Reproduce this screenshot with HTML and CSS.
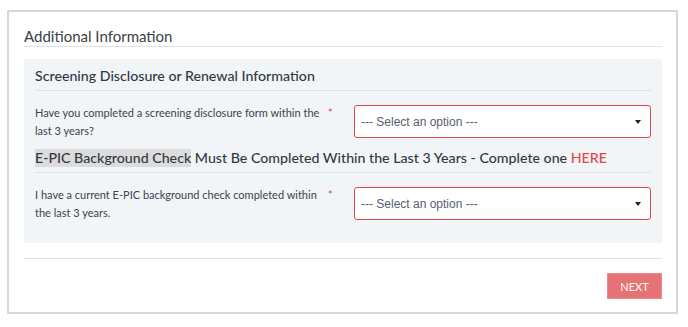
FILE: index.html
```html
<!DOCTYPE html>
<html lang="en">
<head>
  <meta charset="UTF-8" />
  <title>Additional Information</title>
  <link rel="stylesheet" href="styles.css">
</head>
<body>
  <div class="card">
    <h2 class="legend">Additional Information</h2>
    <div class="panel">
      <h3 class="section">Screening Disclosure or Renewal Information</h3>
      <div class="row">
        <label class="question">Have you completed a screening disclosure form within the last 3 years?</label>
        <span class="req">*</span>
        <div class="select"><span>--- Select an option ---</span><span class="caret"></span></div>
      </div>
      <h3 class="section"><span class="mark">E-PIC Background Check</span> Must Be Completed Within the Last 3 Years - Complete one <a href="#">HERE</a></h3>
      <div class="row">
        <label class="question">I have a current E-PIC background check completed within the last 3 years.</label>
        <span class="req">*</span>
        <div class="select"><span>--- Select an option ---</span><span class="caret"></span></div>
      </div>
    </div>
    <div class="footer">
      <button class="next">NEXT</button>
    </div>
  </div>
</body>
</html>
```

FILE: styles.css
```css
:root {
  --text: #333a40;
  --red: #e04848;
  --line: #dee2e6;
  --panel: #f1f5f8;
}
* { box-sizing: border-box; margin: 0; padding: 0; }
body {
  font-family: 'Lato', 'Noto Sans', sans-serif;
  color: var(--text);
  background: #fff;
}
.card {
  margin: 10px 0 0 7px;
  width: 671px;
  height: 304px;
  border: 2px solid #d3dadf;
  padding: 0 14px 0 15px;
}
.legend {
  font-size: 15px; font-weight: 400;
  margin-top: 15px;
  padding-bottom: 1px;
  line-height: 18px;
  border-bottom: 1px solid var(--line);
  color: #3a3f44;
}
.panel {
  background: var(--panel);
  margin-top: 12px;
  padding: 7px 11px 13px;
}
.section {
  font-size: 14.2px; font-weight: 500;
  line-height: 20px;
  padding-bottom: 4px;
  border-bottom: 1px solid var(--line);
  color: #34393e;
}
.mark { background: #dcdcdc; padding: 0 0 1px; }
.section a { color: var(--red); text-decoration: none; }
.row {
  display: flex; align-items: flex-start;
  padding: 13px 0 8px;
}
.question {
  width: 288px;
  font-size: 11px;
  line-height: 18px;
  color: #3d4348;
}
.req { color: var(--red); font-size: 11px; width: 31px; padding: 3px 0 0 5px; line-height: 12px; }
.select {
  flex: 1;
  height: 33px;
  margin-top: 1px;
  background: #fff;
  border: 1px solid var(--red);
  border-radius: 3px;
  display: flex; align-items: center; justify-content: space-between;
  padding: 0 9px 0 6px;
  font-family: 'Liberation Sans', Arial, sans-serif;
  font-size: 12px;
  color: #56616f;
}
.caret {
  width: 0; height: 0;
  border-left: 3px solid transparent;
  border-right: 3px solid transparent;
  border-top: 4px solid #222;
}
.footer {
  margin-top: 15px;
  border-top: 1px solid var(--line);
  display: flex; justify-content: flex-end;
  padding-top: 14px;
}
.next {
  width: 55px; height: 26px;
  background: #e57373;
  border: 1px solid #f08a8a;
  color: #fff;
  font-family: 'Lato', sans-serif;
  font-size: 11px;
}
```
